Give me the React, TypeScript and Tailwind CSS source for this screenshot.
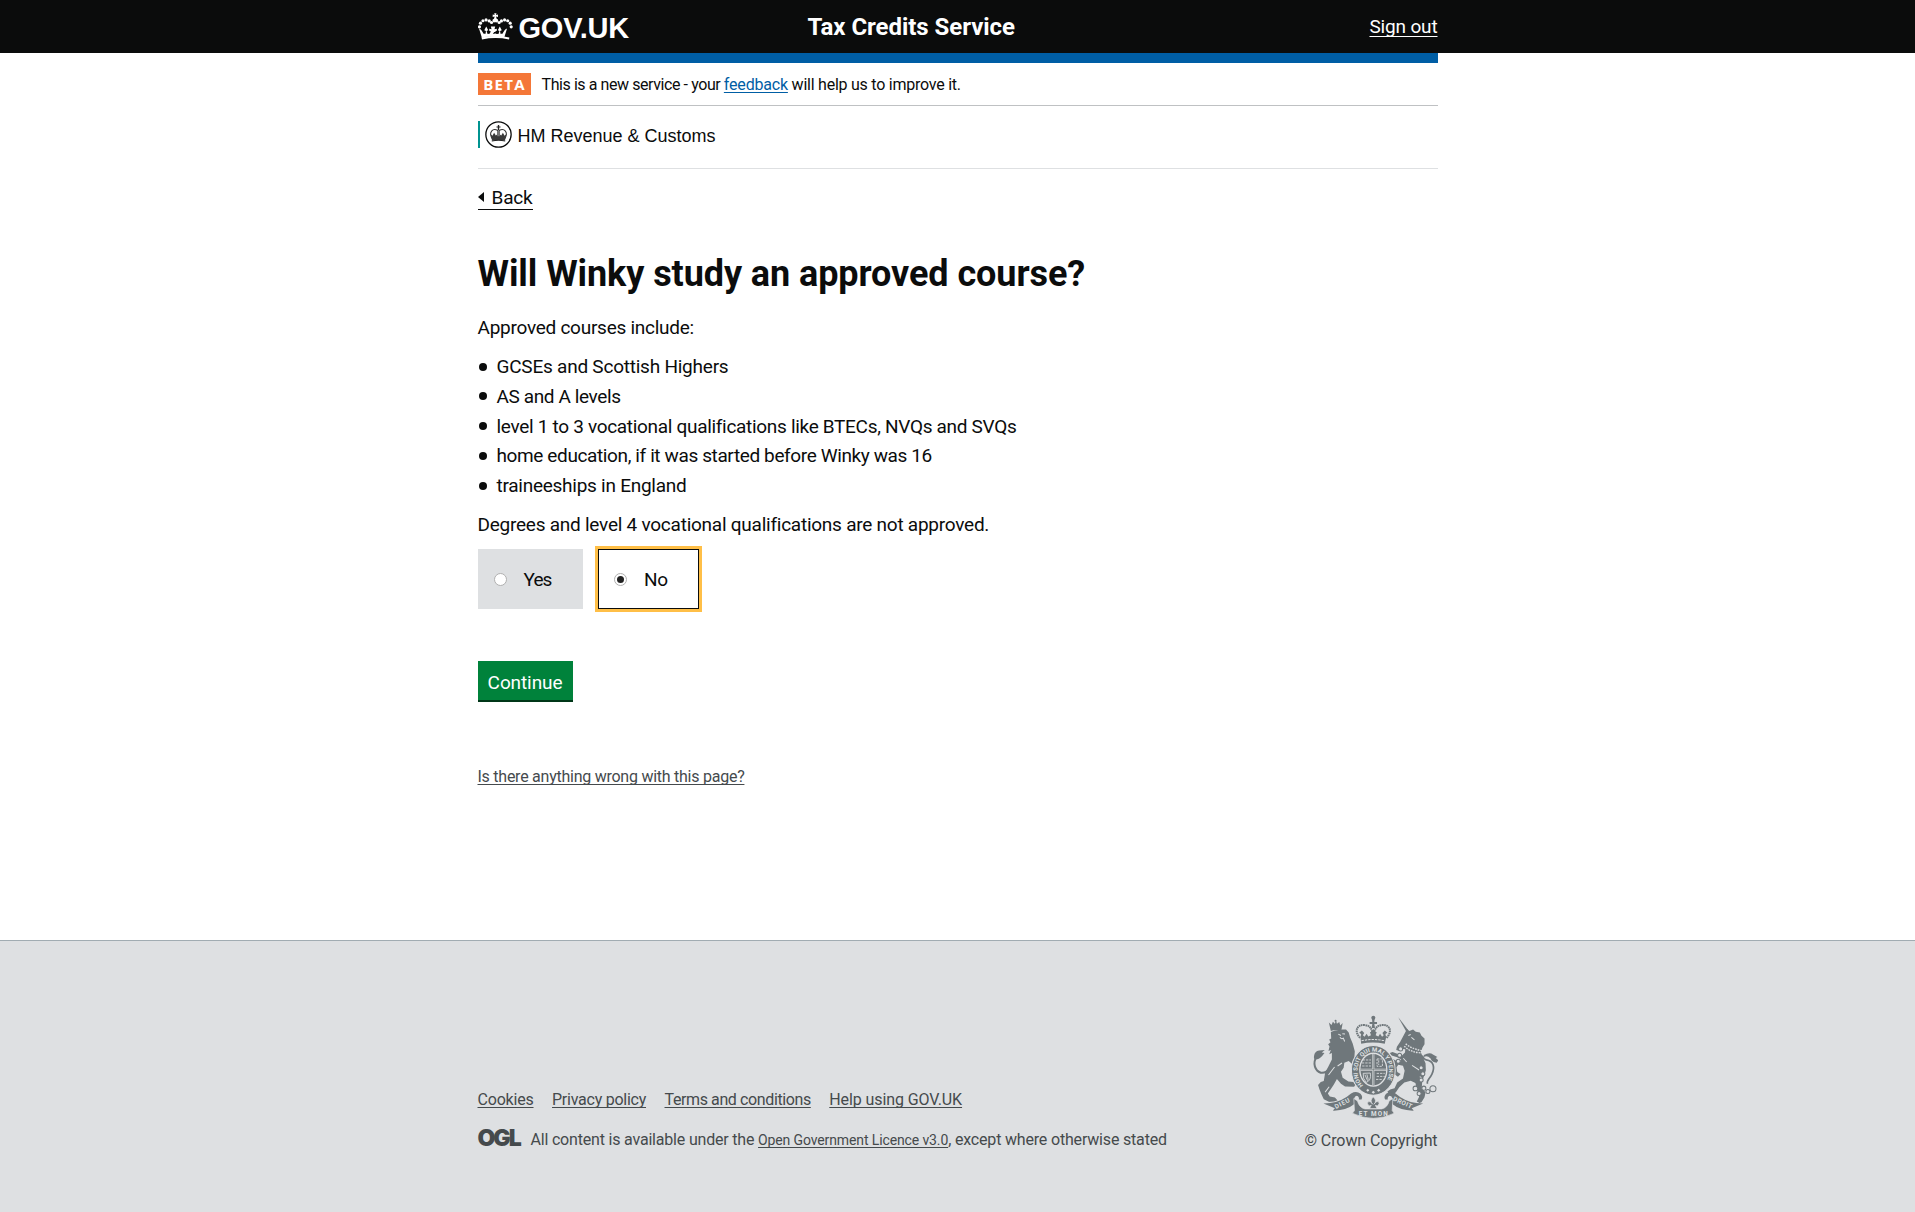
import type { ReactNode } from "react";

function GovCrown() {
  const dots = [
    [28.5, 79], [31.5, 68], [39, 60.5], [48.5, 58], [58, 61], [95, 61], [104.5, 58], [114, 60.5], [121.5, 68], [124.5, 79],
    [65, 66], [88, 66],
  ];
  return (
    <svg viewBox="24 38 106 80" className="h-[27px] w-[35px] fill-white" aria-hidden="true">
      {dots.map(([x, y]) => (
        <circle key={`${x}-${y}`} cx={x} cy={y} r="4.8" />
      ))}
      <path d="M73 38h7l-1.500 5.500 6-1.500v7l-6-1.500 2 7a5.500 5.500 0 0 1-1.500 11h-5a5.500 5.500 0 0 1-1.500-11l2-7-6 1.500v-7l6 1.500z" />
      <path d="M36 113 27 84q5 1 8 6l6 10 6 0 1-8-5-3 6-11 6 11-5 3 3 9 6-1 4-7-5-2 0-6 7 1-2-8 13 0-2 8 7-1 0 6-5 2 4 7 6 1 3-9-5-3 6-11 6 11-5 3 1 8 6 0 6-10q3-5 8-6l-9 29q-40-8-81 0z" />
      <path d="M69 101l4-6h7l4 6-7.500-2z" className="fill-[#0b0c0c]" />
      <path d="M36 117q41-8 82 0l1-6q-42-8-84 0z" />
    </svg>
  );
}

function HmrcCrest() {
  return (
    <svg viewBox="47 65 80 80" className="h-[27px] w-[27px]" aria-hidden="true">
      <circle cx="87" cy="105" r="37.500" fill="white" stroke="#0b0c0c" strokeWidth="3.800" />
      <path d="M69 118C56 99 70 84 85 93v23M105 118C118 99 104 84 89 93v23" fill="none" stroke="#333" strokeWidth="3" />
      <path d="M85 77h4v4h4v3.500h-4v7h-4v-7h-4v-3.500h4z" fill="#222" />
      <path d="M63 103l6 6 5-9 5 8 4-3v5h8v-5l4 3 5-8 5 9 6-6-5 20q-19-3-38 0z" fill="#3a3a3a" />
      <path d="M67 124q20-4 40 0" fill="none" stroke="#222" strokeWidth="3" />
    </svg>
  );
}

function RoyalArms() {
  const ink = "#6f777b";
  const paper = "#dee0e2";
  return (
    <svg viewBox="70 50 374 310" preserveAspectRatio="none" className="h-[104px] w-[126px]" aria-hidden="true">
      {/* lion */}
      <g fill={ink}>
        <path d="M120 72l8 8 4-10 6 6 3-10 3 10 7-5 3 10 7-7-4 23q-17-5-31 1z" />
        <circle cx="140" cy="67" r="3" />
        <path d="M126 101l12-5 22-3 11 0 8 9 4 14 8 20 6 22-1 16 9 10-4 18-12-6-10-9-13 5-2 15-8 12 5 18 17 11 15 2 6 8-4 6-27-1-12-8-12-14-10 18-17 25 6 9 15 3 8 9-4 8-19-3-18-9-7-15-6-15-4-12 8-9 9-3 4-25 10-19 10-20 0-20-8 4 5-13-7 3 3-13-4-7 7-6-4-8 6-3z" />
        <path d="M76 172q2-14 15-16l17-2-9 8 8 1q-12 18-25 20-8-2-6-11z" />
      </g>
      <path d="M84 172c-14 24-4 44 12 50 15 2 22-7 26-14" fill="none" stroke={ink} strokeWidth="6" />
      <path d="M148 107l8 4m4-5l8 1m-15 9q4 7 10 3l4 10M137 205l-18 24m40-36l-13 9m-25 62l-12 16" fill="none" stroke={paper} strokeWidth="3" />

      {/* crown */}
      <circle cx="252" cy="58" r="6" fill={ink} />
      <path d="M248 60h8l-1 11h8v6h-8l2 12h-10l2-12h-8v-6h8z" fill={ink} />
      <path d="M213 118C194 99 203 78 225 80q20 0 24 22M291 118c19-19 10-40-12-38q-20 0-24 22" fill="none" stroke={ink} strokeWidth="6" strokeDasharray="5 1.500" />
      <path d="M214 116l2-9-6-4 8-7 7 8-4 6 5 5 6-9 5 8 8-4-3-9h5l5-10 5 10h5l-3 9 8 4 5-8 6 9 5-5-4-6 7-8 8 7-6 4 2 9-4 20q-36-8-70 0z" fill={ink} />
      <path d="M217 127q35-8 70 0" fill="none" stroke={paper} strokeWidth="3" strokeDasharray="7 3" />

      {/* unicorn */}
      <g fill={ink}>
        <path d="M326 57l6 7 23 31-5 5z" />
        <path d="M352 92l7 6 11-5 8 7 12 2 5 10 9 8 0 17-6 10-5 14 6 14 8 19 1 21-6 18-5 15-1 18 11 15-3 14-9 15-10 4-4-6 7-14-6-20-5-21-14-7-19 5-15 14-12 18-19 3-4-8 8-6 13-4 8-17 17-12 5-23-5-15-14-3-5 8 2 14 10 6-8 8-11-8-5-17-9-6-12 3-5-9 10-12 18-4 15 10 9-8-12-7-17-5-5-8 8-3 28 11 9-9 1-10-9-1-8 6-10-3 2-9 10-15z" />
        <path d="M402 169q18-9 27-1l13 7-5 3 8 7-5 7q-14 0-18-12-10-11-20-5z" />
      </g>
      <path d="M397 171q4 10 12 13c23 3 26 23 17 42-7 15-17 19-13 29" fill="none" stroke={ink} strokeWidth="5" />
      <path d="M344 143q17 18 50 20M348 136q22 17 49 20" fill="none" stroke={paper} strokeWidth="4" strokeDasharray="5 3" />
      <path d="M356 111l7-3m2 9l9 7M367 200l21 14m-47-35l10 11m39 44l13 11" fill="none" stroke={paper} strokeWidth="3" />
      <g fill={paper} stroke={ink} strokeWidth="3">
        <circle cx="333" cy="151" r="6" /><circle cx="330" cy="170" r="6" /><circle cx="326" cy="188" r="6" />
        <circle cx="394" cy="207" r="6" /><circle cx="399" cy="225" r="6" /><circle cx="394" cy="244" r="6" />
        <circle cx="377" cy="269" r="7" /><circle cx="388" cy="284" r="6" /><circle cx="402" cy="268" r="6" />
        <circle cx="414" cy="278" r="6" /><circle cx="429" cy="270" r="9" />
      </g>

      {/* garter and shield */}
      <ellipse cx="252" cy="215" rx="65" ry="74" fill={ink} stroke={paper} strokeWidth="3" />
      <ellipse cx="252" cy="213" rx="42" ry="51" fill={paper} />
      <ellipse cx="252" cy="213" rx="38" ry="47" fill={ink} />
      <path d="M252 166v94M214 213h76" stroke={paper} strokeWidth="6" />
      <path d="M252 166v94M214 213h76" stroke={ink} strokeWidth="2" />
      <path d="M220 184h25m-27 9h27m-26 9h26M263 181h16v22h-16zM268 185v14M262 224h24m-24 9h24m-26 9h20" fill="none" stroke={paper} strokeWidth="2.500" strokeDasharray="7 3" />
      <path d="M222 224l21-1q4 22-12 28-11-11-9-27zM227 228l8 18m-2-19l4 16" fill="none" stroke={paper} strokeWidth="2.500" />
      <path id="garter-line" d="M222 260A47 57 0 1 1 282 260" fill="none" />
      <text fill={paper} className="font-[Roboto] text-[18px] font-bold">
        <textPath href="#garter-line">HONI SOIT QUI MAL Y PENSE</textPath>
      </text>
      <path d="M231 274l5-4 4 5-5 4zM247 280l5-4 5 4-5 5zM263 275l5-5 5 5-6 4z" fill={paper} />

      {/* motto ribbon */}
      <path d="M118 323Q158 322 194 291M386 323Q346 322 310 291" fill="none" stroke={paper} strokeWidth="27" />
      <path d="M104 314l20-2q34-3 62-28 16-9 28 1 8 9 3 17l-8 0q2-8-6-11-6 1-8 8l3 15q-27 22-66 21l6-7z" fill={ink} />
      <path d="M400 314l-20-2q-34-3-62-28-16-9-28 1-8 9-3 17l8 0q-2-8 6-11 6 1 8 8l-3 15q27 22 66 21l-6-7z" fill={ink} />
      <path d="M194 299l11 7q5 20 22 24h50q17-4 22-24l11-7-2 36 6 8q-30 15-62 15t-62-15l6-8z" fill={ink} stroke={paper} strokeWidth="2" />
      <path d="M252 294q12 12 2 22 5-10 13-8 6 7-3 13l-6-2 5 10h-22l5-10-6 2q-9-6-3-13 8-2 13 8-10-10 2-22z" fill={ink} stroke={paper} strokeWidth="2" />
      <g fill={paper} className="font-[Roboto] text-[19px] font-bold">
        <text x="209" y="351" textLength="86">ET MON</text>
        <text x="141" y="330" textLength="48" transform="rotate(-27 141 330)">DIEU</text>
        <text x="309" y="304" textLength="60" transform="rotate(25 309 304)">DROIT</text>
      </g>
    </svg>
  );
}

function Bullet({ children, track }: { children: ReactNode; track: string }) {
  return (
    <li className="mb-[4.75px] flex h-[25px] items-center whitespace-nowrap last:mb-0">
      <span className="mr-[9.500px] ml-[1.500px] size-[8px] rounded-full bg-[#0b0c0c]" />
      <span className={track}>{children}</span>
    </li>
  );
}

const link = "underline decoration-1 underline-offset-2 [text-decoration-skip-ink:none]";

export default function App() {
  return (
    <div className="flex h-[1212px] flex-col overflow-hidden bg-white font-[Roboto,sans-serif] text-[19px] leading-[25px] text-[#0b0c0c]">
      <header className="h-[53px] shrink-0 bg-[#0b0c0c] text-white">
        <div className="mx-auto flex h-full w-[960px] items-center">
          <a className="flex w-[330px] items-center gap-[6px]">
            <GovCrown />
            <span className="pt-[2px] font-['Liberation_Sans',sans-serif] text-[29px] leading-[30px] font-bold tracking-[-0.2px]">GOV.UK</span>
          </a>
          <span className="flex-1 text-[24px] leading-[30px] font-bold tracking-[-0.05px]">Tax Credits Service</span>
          <a className="tracking-[-0.16px] underline decoration-1 underline-offset-[3px] [text-decoration-skip-ink:none]">Sign out</a>
        </div>
      </header>

      <main className="mx-auto w-[960px] shrink-0">
        <div className="h-[10px] bg-[#005ea5]" />
        <div className="flex h-[43px] items-center border-b border-[#bfc1c3] text-[16px] leading-[20px]">
          <strong className="mr-[11px] flex h-[22px] w-[53px] items-center justify-center bg-[#f47738] pl-px font-['Open_Sans',sans-serif] text-[15px] leading-[20px] tracking-[1.300px] text-white">
            <span className="-mt-px">BETA</span>
          </strong>
          <p className="pt-[2px] whitespace-pre">
            <span className="tracking-[-0.42px]">This is a new service - your </span>
            <a className={`${link} tracking-[-0.19px] text-[#005ea5]`}>feedback</a>
            <span className="tracking-[-0.24px]"> will help us to improve it.</span>
          </p>
        </div>

        <div className="h-[63px] border-b border-[#dee0e2] pt-[15px]">
          <div className="flex h-[27px] items-center border-l-2 border-[#009390] pl-[5.500px]">
            <HmrcCrest />
            <span className="ml-[5.500px] pt-[3px] font-['Liberation_Sans',sans-serif] text-[18px]">HM Revenue &amp; Customs</span>
          </div>
        </div>

        <a className="mt-[16px] flex h-[25px] w-[55px] items-center border-b border-[#0b0c0c] leading-[24px] tracking-[-0.2px]">
          <svg viewBox="0 0 6 10" className="mr-[8px] h-[10px] w-[6px]" aria-hidden="true">
            <path d="M6 0v10L0 5z" fill="#0b0c0c" />
          </svg>
          <span className="pt-px">Back</span>
        </a>

        <h1 className="mt-[43.500px] text-[36px] leading-[40px] font-bold tracking-[-0.08px]">
          Will Winky study an approved course?
        </h1>
        <p className="mt-[21.500px] tracking-[-0.26px]">Approved courses include:</p>
        <ul className="mt-[14px]">
          <Bullet track="tracking-[-0.23px]">GCSEs and Scottish Highers</Bullet>
          <Bullet track="tracking-[-0.39px]">AS and A levels</Bullet>
          <Bullet track="tracking-[-0.31px]">level 1 to 3 vocational qualifications like BTECs, NVQs and SVQs</Bullet>
          <Bullet track="tracking-[-0.38px]">home education, if it was started before Winky was 16</Bullet>
          <Bullet track="tracking-[-0.26px]">traineeships in England</Bullet>
        </ul>
        <p className="mt-[14px] tracking-[-0.245px]">
          Degrees and level 4 vocational qualifications are not approved.
        </p>

        <div className="mt-[12.300px] flex h-[60px] gap-[15px]">
          <label className="flex w-[105px] items-center bg-[#dee0e2] pl-[16px]">
            <span className="mr-[17px] size-[13px] rounded-full border border-[#b0b0b0] bg-white" />
            <span className="pt-px tracking-[-0.9px]">Yes</span>
          </label>
          <label className="flex w-[101px] items-center border border-[#0b0c0c] bg-white pl-[15px] outline-3 outline-[#ffbf47]">
            <span className="mr-[17.500px] flex size-[13px] items-center justify-center rounded-full border border-[#b0b0b0] bg-white">
              <span className="size-[7px] rounded-full bg-[#222222]" />
            </span>
            <span className="pt-px tracking-[-0.4px]">No</span>
          </label>
        </div>

        <button className="mt-[52px] flex h-[41px] w-[95px] items-center justify-center border-b-2 border-[#003618] bg-[#00823b] pt-[4px] tracking-[-0.1px] text-white">
          Continue
        </button>

        <p className="mt-[65px] text-[16px] leading-[20px]">
          <a className={`${link} tracking-[-0.25px] text-[#454a4d]`}>Is there anything wrong with this page?</a>
        </p>
      </main>

      <footer className="mt-[153.200px] flex-1 border-t border-[#a1acb2] bg-[#dee0e2] pt-[74px] text-[16px] leading-[20px] text-[#454a4c]">
        <div className="mx-auto flex w-[960px] items-end justify-between">
          <div>
            <nav className="mb-[18px] flex whitespace-nowrap">
              <a className={`${link} mr-[18.500px] tracking-[-0.2px]`}>Cookies</a>
              <a className={`${link} mr-[18.500px] tracking-[-0.25px]`}>Privacy policy</a>
              <a className={`${link} mr-[18.500px] tracking-[-0.39px]`}>Terms and conditions</a>
              <a className={`${link} tracking-[-0.09px]`}>Help using GOV.UK</a>
            </nav>
            <div className="flex items-center">
              <span className="w-[53px] pb-[3px] font-[Inter,sans-serif] text-[23px] font-black tracking-[-2px]">OGL</span>
              <p className="pt-px whitespace-pre">
                <span className="tracking-[-0.19px]">All content is available under the </span>
                <a className={`${link} text-[14px] tracking-[-0.12px]`}>Open Government Licence v3.0</a>
                <span className="tracking-[-0.18px]">, except where otherwise stated</span>
              </p>
            </div>
          </div>
          <div className="flex flex-col items-end">
            <RoyalArms />
            <span className="mt-[12px] tracking-[-0.09px]">© Crown Copyright</span>
          </div>
        </div>
      </footer>
    </div>
  );
}
